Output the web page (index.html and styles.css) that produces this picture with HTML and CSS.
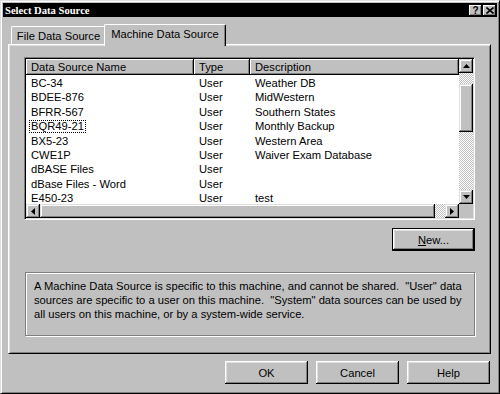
FILE: index.html
```html
<!DOCTYPE html>
<html>
<head>
<meta charset="utf-8">
<link rel="stylesheet" href="styles.css">
</head>
<body>
<div class="window">
  <div class="titlebar">
    <span class="title">Select Data Source</span>
    <div class="tb-buttons">
      <span class="tb-btn help">?</span>
      <span class="tb-btn">
        <svg width="8" height="7" viewBox="0 0 8 7"><path d="M0.5 0.5 L7.5 6.5 M7.5 0.5 L0.5 6.5" stroke="#000" stroke-width="1.6"/></svg>
      </span>
    </div>
  </div>
  <div class="tabstrip">
    <div class="tab tab-file">File Data Source</div>
    <div class="tab tab-active">Machine Data Source</div>
  </div>
  <div class="panel">
    <div class="list">
      <div class="list-main">
        <div class="header">
          <div class="hcell c-name">Data Source Name</div>
          <div class="hcell c-type">Type</div>
          <div class="hcell c-desc">Description</div>
        </div>
        <div class="rows">
          <div class="row"><span class="c-name">BC-34</span><span class="c-type">User</span><span class="c-desc">Weather DB</span></div>
          <div class="row"><span class="c-name">BDEE-876</span><span class="c-type">User</span><span class="c-desc">MidWestern</span></div>
          <div class="row"><span class="c-name">BFRR-567</span><span class="c-type">User</span><span class="c-desc">Southern States</span></div>
          <div class="row"><span class="c-name"><span class="focus">BQR49-21</span></span><span class="c-type">User</span><span class="c-desc">Monthly Backup</span></div>
          <div class="row"><span class="c-name">BX5-23</span><span class="c-type">User</span><span class="c-desc">Western Area</span></div>
          <div class="row"><span class="c-name">CWE1P</span><span class="c-type">User</span><span class="c-desc">Waiver Exam Database</span></div>
          <div class="row"><span class="c-name">dBASE Files</span><span class="c-type">User</span><span class="c-desc"></span></div>
          <div class="row"><span class="c-name">dBase Files - Word</span><span class="c-type">User</span><span class="c-desc"></span></div>
          <div class="row"><span class="c-name">E450-23</span><span class="c-type">User</span><span class="c-desc">test</span></div>
        </div>
      </div>
      <div class="vscroll">
        <div class="sbtn"><svg width="7" height="4" viewBox="0 0 7 4"><path d="M3.5 0 L7 4 L0 4 Z" fill="#000"/></svg></div>
        <div class="track t-top"></div>
        <div class="thumb v-thumb"></div>
        <div class="track t-fill"></div>
        <div class="sbtn"><svg width="7" height="4" viewBox="0 0 7 4"><path d="M0 0 L7 0 L3.5 4 Z" fill="#000"/></svg></div>
      </div>
      <div class="hscroll">
        <div class="sbtn"><svg width="4" height="7" viewBox="0 0 4 7"><path d="M0 3.5 L4 0 L4 7 Z" fill="#000"/></svg></div>
        <div class="thumb h-thumb"></div>
        <div class="track t-fill"></div>
        <div class="sbtn"><svg width="4" height="7" viewBox="0 0 4 7"><path d="M0 0 L4 3.5 L0 7 Z" fill="#000"/></svg></div>
      </div>
      <div class="corner"></div>
    </div>
    <div class="new-row">
      <div class="button default"><span><u>N</u>ew...</span></div>
    </div>
    <div class="info">A Machine Data Source is specific to this machine, and cannot be shared.&nbsp; "User" data<br>sources are specific to a user on this machine.&nbsp; "System" data sources can be used by<br>all users on this machine, or by a system-wide service.</div>
  </div>
  <div class="buttons">
    <div class="button">OK</div>
    <div class="button">Cancel</div>
    <div class="button">Help</div>
  </div>
</div>
</body>
</html>
```

FILE: styles.css
```css
* { box-sizing: border-box; }
html, body { margin: 0; padding: 0; }
body {
  width: 500px;
  height: 394px;
  overflow: hidden;
  background: #c0c0c0;
  font-family: "Liberation Sans", Arial, sans-serif;
  font-size: 11.2px;
  color: #000;
}
.window {
  width: 500px;
  height: 394px;
  background: #c0c0c0;
  border: 1px solid;
  border-color: #dfdfdf #000 #000 #dfdfdf;
  box-shadow: inset 1px 1px #fff, inset -1px -1px #808080;
  padding: 2px;
  display: flex;
  flex-direction: column;
}
.titlebar {
  height: 14px;
  flex: none;
  background: #000;
  color: #fff;
  display: flex;
  align-items: center;
  justify-content: space-between;
  padding: 0 1px 0 2px;
}
.title {
  font-family: "Liberation Serif", "Times New Roman", serif;
  font-weight: bold;
  font-size: 10.6px;
}
.tb-buttons { display: flex; gap: 1px; }
.tb-btn {
  width: 13px;
  height: 11px;
  background: #c0c0c0;
  box-shadow: inset -1px -1px #000, inset 1px 1px #fff, inset -2px -2px #808080;
  display: flex;
  align-items: center;
  justify-content: center;
  color: #000;
}
.tb-btn.help {
  font-family: "Liberation Sans", Arial, sans-serif;
  font-weight: bold;
  font-size: 10px;
  line-height: 11px;
}
.tabstrip {
  flex: none;
  display: flex;
  align-items: flex-end;
  height: 22px;
  margin: 7px 0 -2px 8px;
  position: relative;
  z-index: 1;
}
.tab {
  background: #c0c0c0;
  border-top: 1px solid #fff;
  border-left: 1px solid #fff;
  border-right: 1px solid #000;
  border-radius: 2px 2px 0 0;
  box-shadow: inset -1px 0 #808080;
  display: flex;
  align-items: center;
  justify-content: center;
}
.tab-file {
  width: 95px;
  height: 18px;
  margin-bottom: 2px;
}
.tab-active {
  width: 122px;
  height: 22px;
  margin-left: -2px;
  padding-bottom: 3px;
  position: relative;
}
.panel {
  flex: none;
  margin-left: 5px;
  width: 483px;
  height: 310px;
  border: 1px solid;
  border-color: #fff #000 #000 #fff;
  box-shadow: inset 1px 1px #dfdfdf, inset -1px -1px #808080;
  padding: 12px 15px 0 15px;
  display: flex;
  flex-direction: column;
}
.list {
  flex: none;
  height: 163px;
  border: 1px solid;
  border-color: #808080 #fff #fff #808080;
  box-shadow: inset 1px 1px #000, inset -1px -1px #dfdfdf;
  padding: 1px;
  background: #fff;
  display: grid;
  grid-template-columns: 1fr 14px;
  grid-template-rows: 1fr 14px;
}
.list-main {
  overflow: hidden;
  display: flex;
  flex-direction: column;
}
.header {
  flex: none;
  display: flex;
  height: 16px;
}
.hcell {
  height: 16px;
  line-height: 16px;
  background: #c0c0c0;
  box-shadow: inset -1px -1px #000, inset 1px 1px #fff, inset -2px -2px #808080;
  padding-left: 5px;
  white-space: nowrap;
}
.c-name { width: 168px; padding-left: 5px; flex: none; white-space: nowrap; }
.c-type { width: 56px; padding-left: 5px; flex: none; white-space: nowrap; }
.c-desc { flex: 1; padding-left: 5px; white-space: nowrap; }
.rows {
  padding-top: 1px;
  overflow: hidden;
}
.row {
  display: flex;
  height: 14.4px;
  line-height: 14.4px;
}
.focus {
  display: inline-block;
  border: 1px dotted #000;
  line-height: 11px;
  padding: 0 1px;
  margin-left: -2px;
}
.vscroll, .hscroll {
  display: flex;
  background: #c0c0c0;
}
.vscroll { flex-direction: column; }
.sbtn {
  flex: none;
  width: 14px;
  height: 14px;
  background: #c0c0c0;
  box-shadow: inset -1px -1px #000, inset 1px 1px #dfdfdf, inset -2px -2px #808080, inset 2px 2px #fff;
  display: flex;
  align-items: center;
  justify-content: center;
}
.thumb {
  flex: none;
  background: #c0c0c0;
  box-shadow: inset -1px -1px #000, inset 1px 1px #dfdfdf, inset -2px -2px #808080, inset 2px 2px #fff;
}
.v-thumb { height: 48px; width: 14px; }
.h-thumb { width: 395px; height: 14px; }
.track {
  background: repeating-conic-gradient(#c0c0c0 0% 25%, #fff 0% 50%) 0 0 / 2px 2px;
}
.t-top { flex: none; height: 11px; }
.t-fill { flex: 1; }
.corner { background: #c0c0c0; }
.new-row {
  flex: none;
  display: flex;
  justify-content: flex-end;
  margin-top: 8px;
}
.button {
  width: 83px;
  height: 23px;
  background: #c0c0c0;
  box-shadow: inset -1px -1px #000, inset 1px 1px #fff, inset -2px -2px #808080, inset 2px 2px #dfdfdf;
  display: flex;
  align-items: center;
  justify-content: center;
}
.button.default {
  border: 1px solid #000;
  box-shadow: inset -1px -1px #000, inset 1px 1px #fff, inset -2px -2px #808080, inset 2px 2px #dfdfdf;
}
.info {
  flex: none;
  margin-top: 21px;
  margin-left: 1px;
  width: 450px;
  height: 64px;
  border: 1px solid #808080;
  box-shadow: inset 1px 1px #fff, 1px 1px #fff;
  padding: 6px 0 0 8px;
  line-height: 14px;
  white-space: nowrap;
}
.buttons {
  flex: none;
  display: flex;
  justify-content: flex-end;
  gap: 8px;
  margin-top: 7px;
  padding-right: 7px;
}
```
